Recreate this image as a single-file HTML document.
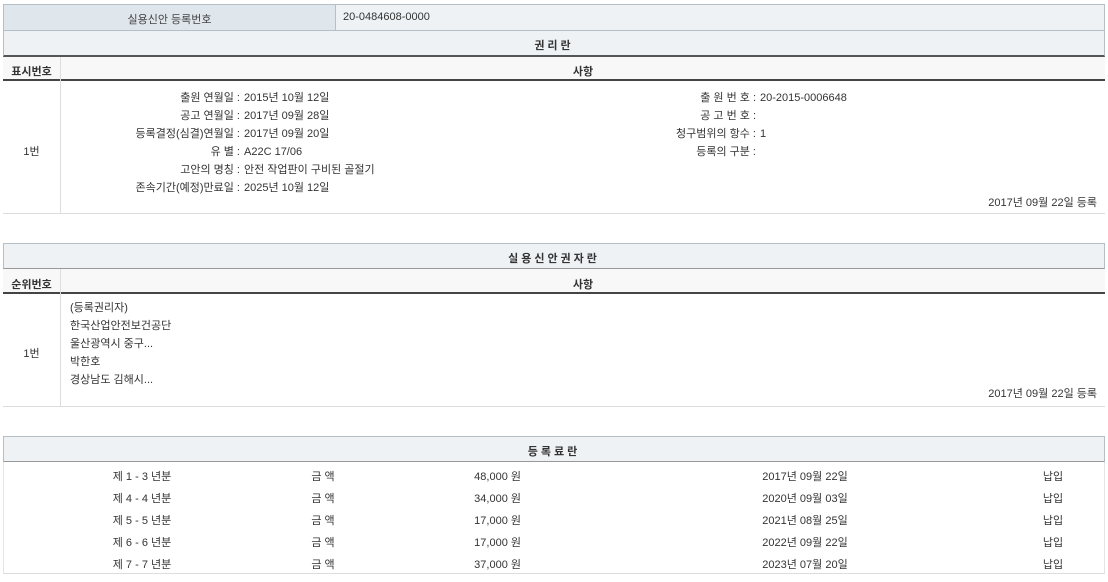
<!DOCTYPE html>
<html><head><meta charset="utf-8"><style>
body{margin:0;width:1108px;height:582px;background:#fff;font-family:"Liberation Sans","Noto Sans CJK KR",sans-serif;font-size:11px;color:#333;position:relative;overflow:hidden}
.a{position:absolute;white-space:nowrap}
.box{position:absolute;box-sizing:border-box}
.c{text-align:center}
.r{text-align:right}
.b{font-weight:bold;color:#333}
</style></head><body>
<!-- section 1 -->
<div class="box" style="left:3px;top:4px;width:1102px;height:27px;background:#eef2f5;border:1px solid #b5bfc8"></div>
<div class="box" style="left:3px;top:4px;width:333px;height:27px;background:#dfe6ec;border:1px solid #b5bfc8"></div>
<div class="a c" style="left:3px;top:11px;width:333px;color:#444">실용신안 등록번호</div>
<div class="a" style="left:343px;top:11px;color:#333">20-0484608-0000</div>
<div class="box" style="left:3px;top:30px;width:1102px;height:27px;background:#eef2f5;border:1px solid #b5bfc8;border-bottom:2px solid #555"></div>
<div class="a c b" style="left:3px;top:37px;width:1102px;letter-spacing:3px">권리란</div>
<div class="box" style="left:3px;top:57px;width:1102px;height:24px;background:#f8f8f8;border-bottom:2px solid #444"></div>
<div class="box" style="left:60px;top:57px;width:1px;height:157px;background:#ddd"></div>
<div class="a c b" style="left:3px;top:63px;width:57px">표시번호</div>
<div class="a c b" style="left:61px;top:63px;width:1044px">사항</div>
<div class="box" style="left:3px;top:213px;width:1102px;height:1px;background:#ddd"></div>
<div class="a c" style="left:3px;top:143px;width:57px">1번</div>
<div class="a r" style="left:40px;top:89px;width:200px;line-height:18px">출원 연월일 :<br>공고 연월일 :<br>등록결정(심결)연월일 :<br>유 별 :<br>고안의 명칭 :<br>존속기간(예정)만료일 :</div>
<div class="a" style="left:244px;top:89px;line-height:18px">2015년 10월 12일<br>2017년 09월 28일<br>2017년 09월 20일<br>A22C 17/06<br>안전 작업판이 구비된 골절기<br>2025년 10월 12일</div>
<div class="a r" style="left:556px;top:89px;width:200px;line-height:18px">출 원 번 호 :<br>공 고 번 호 :<br>청구범위의 항수 :<br>등록의 구분 :</div>
<div class="a" style="left:760px;top:89px;line-height:18px">20-2015-0006648<br><br>1<br></div>
<div class="a r" style="left:800px;top:194px;width:297px">2017년 09월 22일 등록</div>
<!-- section 2 -->
<div class="box" style="left:3px;top:243px;width:1102px;height:26px;background:#eef2f5;border:1px solid #b5bfc8;border-bottom:1px solid #999"></div>
<div class="a c b" style="left:3px;top:250px;width:1102px;letter-spacing:3px">실용신안권자란</div>
<div class="box" style="left:3px;top:269px;width:1102px;height:25px;background:#f8f8f8;border-bottom:2px solid #444"></div>
<div class="box" style="left:60px;top:269px;width:1px;height:138px;background:#ddd"></div>
<div class="a c b" style="left:3px;top:276px;width:57px">순위번호</div>
<div class="a c b" style="left:61px;top:276px;width:1044px">사항</div>
<div class="a c" style="left:3px;top:345px;width:57px">1번</div>
<div class="a" style="left:70px;top:299px;line-height:18px">(등록권리자)<br>한국산업안전보건공단<br>울산광역시 중구...<br>박한호<br>경상남도 김해시...</div>
<div class="a r" style="left:800px;top:385px;width:297px">2017년 09월 22일 등록</div>
<div class="box" style="left:3px;top:406px;width:1102px;height:1px;background:#ddd"></div>
<!-- section 3 -->
<div class="box" style="left:3px;top:436px;width:1102px;height:26px;background:#eef2f5;border:1px solid #b5bfc8;border-bottom:1px solid #999"></div>
<div class="a c b" style="left:3px;top:443px;width:1102px;letter-spacing:3px">등록료란</div>
<div class="a c" style="left:72px;top:466px;width:140px;line-height:22px">제 1 - 3 년분<br>제 4 - 4 년분<br>제 5 - 5 년분<br>제 6 - 6 년분<br>제 7 - 7 년분</div>
<div class="a c" style="left:283px;top:466px;width:80px;line-height:22px">금 액<br>금 액<br>금 액<br>금 액<br>금 액</div>
<div class="a r" style="left:420px;top:466px;width:101px;line-height:22px">48,000 원<br>34,000 원<br>17,000 원<br>17,000 원<br>37,000 원</div>
<div class="a c" style="left:735px;top:466px;width:140px;line-height:22px">2017년 09월 22일<br>2020년 09월 03일<br>2021년 08월 25일<br>2022년 09월 22일<br>2023년 07월 20일</div>
<div class="a c" style="left:1023px;top:466px;width:60px;line-height:22px">납입<br>납입<br>납입<br>납입<br>납입</div>
<div class="box" style="left:3px;top:573px;width:1102px;height:1px;background:#ddd"></div>
<div class="box" style="left:3px;top:462px;width:1px;height:112px;background:#e4e4e4"></div>
<div class="box" style="left:1104px;top:462px;width:1px;height:112px;background:#e4e4e4"></div>
</body></html>
